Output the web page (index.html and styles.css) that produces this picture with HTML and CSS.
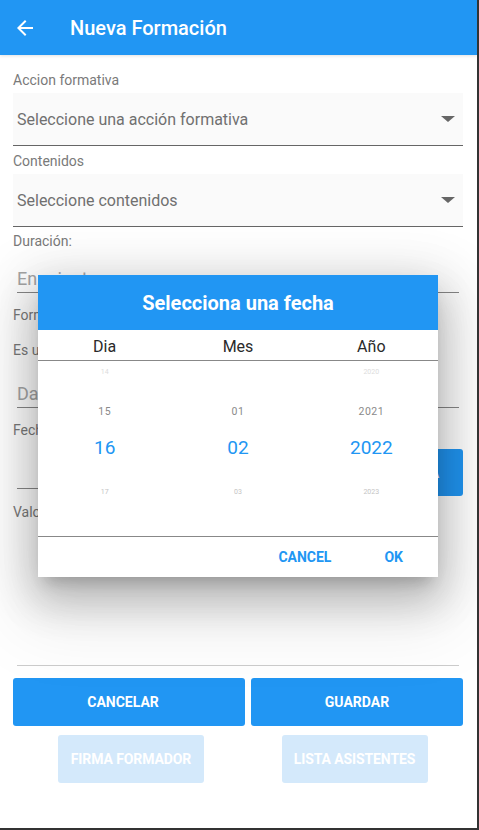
FILE: index.html
```html
<!DOCTYPE html>
<html lang="es">
<head>
<meta charset="utf-8">
<title>Nueva Formación</title>
<link rel="stylesheet" href="styles.css">
</head>
<body>
<div class="page">
  <header class="appbar">
    <svg class="back" width="24" height="24" viewBox="0 0 24 24"><path fill="#fff" d="M20 11H7.83l5.59-5.59L12 4l-8 8 8 8 1.41-1.41L7.83 13H20v-2z"/></svg>
    <h1 class="title">Nueva Formación</h1>
  </header>

  <main class="form">
    <div class="label l1">Accion formativa</div>
    <div class="select"><span>Seleccione una acción formativa</span><i class="caret"></i></div>
    <div class="label l2">Contenidos</div>
    <div class="select"><span>Seleccione contenidos</span><i class="caret"></i></div>
    <div class="label l3">Duración:</div>
    <div class="input">En minutos</div>
    <div class="label l4">Formador:</div>
    <div class="label l5">Es un formador externo:</div>
    <div class="input">Datos del formador</div>
    <div class="label l4">Fecha:</div>
    <div class="daterow">
      <div class="input dateinput"></div>
      <button class="btn datebtn">FECHA</button>
    </div>
    <div class="label l6">Valoración:</div>
    <div class="divider"></div>
    <div class="actions">
      <button class="btn cancel">CANCELAR</button>
      <button class="btn">GUARDAR</button>
    </div>
    <div class="actions secondary">
      <button class="btn disabled firma">FIRMA FORMADOR</button>
      <button class="btn disabled lista">LISTA ASISTENTES</button>
    </div>
  </main>

  <div class="dialog">
    <div class="dlg-head">Selecciona una fecha</div>
    <div class="cols">
      <div>Dia</div><div>Mes</div><div>Año</div>
    </div>
    <div class="picker">
      <div class="wheel">
        <div class="r far">14</div>
        <div class="r near">15</div>
        <div class="r sel">16</div>
        <div class="r far low">17</div>
      </div>
      <div class="wheel">
        <div class="r far"></div>
        <div class="r near">01</div>
        <div class="r sel">02</div>
        <div class="r far low">03</div>
      </div>
      <div class="wheel">
        <div class="r far">2020</div>
        <div class="r near">2021</div>
        <div class="r sel">2022</div>
        <div class="r far low">2023</div>
      </div>
    </div>
    <div class="dlg-actions">
      <span class="dlg-btn">CANCEL</span>
      <span class="dlg-btn">OK</span>
    </div>
  </div>
</div>
</body>
</html>
```

FILE: styles.css
```css
* { box-sizing: border-box; }
html, body { margin: 0; padding: 0; background: #fff; }
body { font-family: Roboto, "Noto Sans", "Liberation Sans", sans-serif; }

.page {
  position: relative;
  width: 479px;
  height: 830px;
  border-right: 2px solid #333;
  border-bottom: 2px solid #333;
  overflow: hidden;
  background: #fff;
}

.appbar {
  height: 55px;
  background: #2196F3;
  display: flex;
  align-items: center;
  box-shadow: 0 1px 3px rgba(0,0,0,0.12);
  position: relative;
  z-index: 1;
}
.back { margin-left: 13px; display: block; }
.title {
  margin: 0 0 0 33px;
  color: #fff;
  font-size: 20px;
  font-weight: 500;
  line-height: 24px;
}

.form { padding: 0 14px 0 13px; }

.label {
  font-size: 14px;
  line-height: 16px;
  color: #7a7a7a;
  white-space: nowrap;
}
.l1 { margin-top: 17px; }
.l2 { margin-top: 7px; }
.l3 { margin-top: 6px; }
.l4 { margin-top: 14px; }
.l5 { margin-top: 19px; }
.l6 { margin-top: 8px; }

.select {
  margin-top: 5px;
  height: 53px;
  background: #fafafa;
  border-bottom: 1px solid #666;
  display: flex;
  align-items: center;
  justify-content: space-between;
  padding: 0 8px 0 4px;
  font-size: 16px;
  color: #707070;
}
.caret {
  width: 0; height: 0;
  border-left: 7px solid transparent;
  border-right: 7px solid transparent;
  border-top: 6px solid #666;
}

.input {
  margin: 8px 4px 0 4px;
  height: 36px;
  padding-top: 9px;
  line-height: 26px;
  font-size: 18px;
  color: #a6a6a6;
  border-bottom: 1px solid #888;
  white-space: nowrap;
  overflow: hidden;
}
.label + .input { margin-top: 8px; }
.l5 + .input { margin-top: 14px; }

.daterow {
  margin-top: 11px;
  display: flex;
  align-items: flex-start;
  gap: 10px;
  height: 47px;
}
.dateinput { flex: 1; margin: 0 0 0 4px; height: 40px; }

.btn {
  border: 0;
  border-radius: 3px;
  background: #2196F3;
  color: #fff;
  font-family: Roboto, "Noto Sans", "Liberation Sans", sans-serif;
  font-size: 14px;
  font-weight: 700;
  height: 48px;
  padding: 0 12px;
  white-space: nowrap;
}
.btn.cancel { padding: 0 24px 0 12px; }
.datebtn { width: 92px; height: 47px; }

.divider {
  margin: 145px 4px 0 4px;
  height: 1px;
  background: #ccc;
}

.actions {
  margin-top: 12px;
  display: grid;
  grid-template-columns: 232px 212px;
  gap: 6px;
}
.actions.secondary {
  margin-top: 9px;
  justify-items: center;
}
.btn.disabled {
  background: #d4e9fb;
  width: 146px;
  padding: 0;
  letter-spacing: -0.1px;
}
.btn.firma { margin-left: 4px; }
.btn.lista { margin-right: 5px; }

.dialog {
  position: absolute;
  left: 38px;
  top: 275px;
  width: 400px;
  height: 302px;
  background: #fff;
  z-index: 5;
  box-shadow: 0 24px 38px 3px rgba(0,0,0,0.14), 0 9px 46px 8px rgba(0,0,0,0.12), 0 11px 15px -7px rgba(0,0,0,0.2), 0 30px 70px 20px rgba(0,0,0,0.08);
}
.dlg-head {
  height: 55px;
  background: #2196F3;
  color: #fff;
  font-size: 20px;
  font-weight: 700;
  display: flex;
  align-items: center;
  justify-content: center;
}
.cols {
  display: grid;
  grid-template-columns: repeat(3, 1fr);
  height: 31px;
  padding-top: 4px;
  line-height: 26px;
  border-bottom: 1px solid #888;
  text-align: center;
  font-size: 16px;
  color: #2a2a2a;
}
.picker {
  display: grid;
  grid-template-columns: repeat(3, 1fr);
  height: 176px;
  border-bottom: 1px solid #888;
}
.wheel {
  display: flex;
  flex-direction: column;
  align-items: center;
}
.r { text-align: center; }
.far { height: 22px; line-height: 22px; font-size: 7px; color: #dcdcdc; }
.far.low { margin-top: 18px; color: #c4c4c4; }
.near { margin-top: 18px; height: 22px; line-height: 22px; font-size: 10.5px; color: #8a8a8a; letter-spacing: 0.5px; }
.sel { margin-top: 10px; height: 30px; line-height: 30px; font-size: 19px; color: #2196F3; }

.dlg-actions {
  height: 40px;
  display: flex;
  align-items: center;
  justify-content: flex-end;
  gap: 53px;
  padding-right: 35px;
}
.dlg-btn {
  color: #2196F3;
  font-size: 14px;
  font-weight: 700;
}
```
